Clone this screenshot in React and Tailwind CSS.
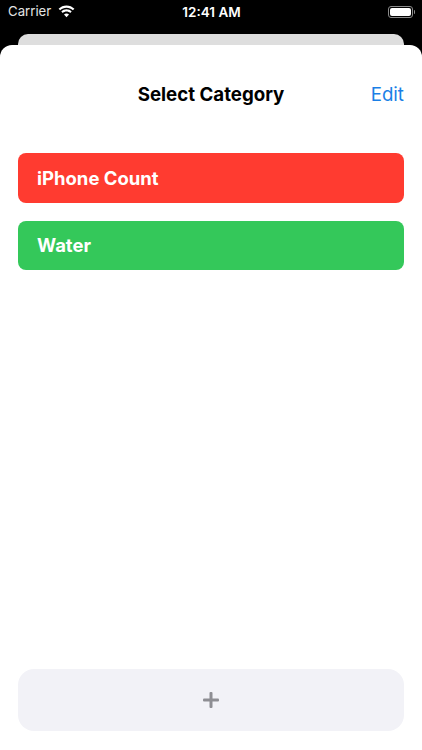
const FONT = 'font-["Inter","Liberation_Sans",sans-serif]'

function StatusBar() {
  return (
    <div className="h-[34px] pb-[10px] grid grid-cols-3 items-center pl-2 pr-[7px] text-white">
      <div className="flex items-center gap-[7px]">
        <span className="text-[13.200px] text-[#e4e4e4]">Carrier</span>
        <svg width="17" height="13" viewBox="0 0 17 12.500" fill="white">
          <path d="M8.500 2.500c2.500 0 4.700 1 6.400 2.600l1.500-1.600C14.300 1.400 11.500.200 8.500.200S2.700 1.400.600 3.500l1.500 1.600C3.800 3.500 6 2.500 8.500 2.500z" />
          <path d="M8.500 6.300c1.400 0 2.700.5 3.700 1.500l1.500-1.600c-1.400-1.300-3.200-2.100-5.200-2.100s-3.800.8-5.200 2.100l1.500 1.600c1-1 2.300-1.500 3.700-1.500z" />
          <path d="M8.500 8.300c-1 0-1.900.4-2.500 1l2.500 2.700 2.500-2.700c-.6-.6-1.500-1-2.500-1z" />
        </svg>
      </div>
      <span className="text-center text-[13.500px] font-semibold">12:41 AM</span>
      <div className="flex items-center justify-end gap-[1px]">
        <div className="w-[25px] h-[12px] rounded-[3px] border border-[#8a8a8a] p-[1px]">
          <div className="w-full h-full rounded-[2px] bg-white" />
        </div>
        <div className="w-[1.500px] h-[4px] rounded-r-sm bg-[#8a8a8a]" />
      </div>
    </div>
  )
}

export default function App() {
  return (
    <div className={`${FONT} w-[422px] h-[750px] bg-black flex flex-col overflow-hidden`}>
      <StatusBar />
      {/* stacked sheet behind */}
      <div className="mx-[18px] h-[11px] rounded-t-[10px] bg-[#dedede] shrink-0" />
      {/* sheet */}
      <div className="flex-1 bg-white rounded-t-[12px] px-[18px] flex flex-col">
        <div className="relative h-[108px] pt-[36px] flex justify-center shrink-0">
          <span className="text-[18.700px] leading-[28px] font-bold text-black">Select Category</span>
          <span className="absolute right-0 top-[36px] text-[18.700px] leading-[28px] text-[#1a7fe6]">Edit</span>
        </div>
        <div className="flex flex-col gap-[18px]">
          <div className="h-[50px] rounded-[8px] bg-[#ff3b30] flex items-center px-[19px] pt-[1px] text-[18.500px] font-bold text-white">iPhone Count</div>
          <div className="h-[49px] rounded-[8px] bg-[#34c85a] flex items-center px-[19px] pt-[1px] text-[18.500px] font-bold text-white">Water</div>
        </div>
        <div className="mt-auto mb-[19px] h-[62px] rounded-[16px] bg-[#f2f2f7] flex items-center justify-center">
          <svg width="16" height="16" viewBox="0 0 16 16" fill="#8e8e93">
            <rect x="0" y="6.500" width="16" height="3" rx="1" />
            <rect x="6.500" y="0" width="3" height="16" rx="1" />
          </svg>
        </div>
      </div>
    </div>
  )
}
